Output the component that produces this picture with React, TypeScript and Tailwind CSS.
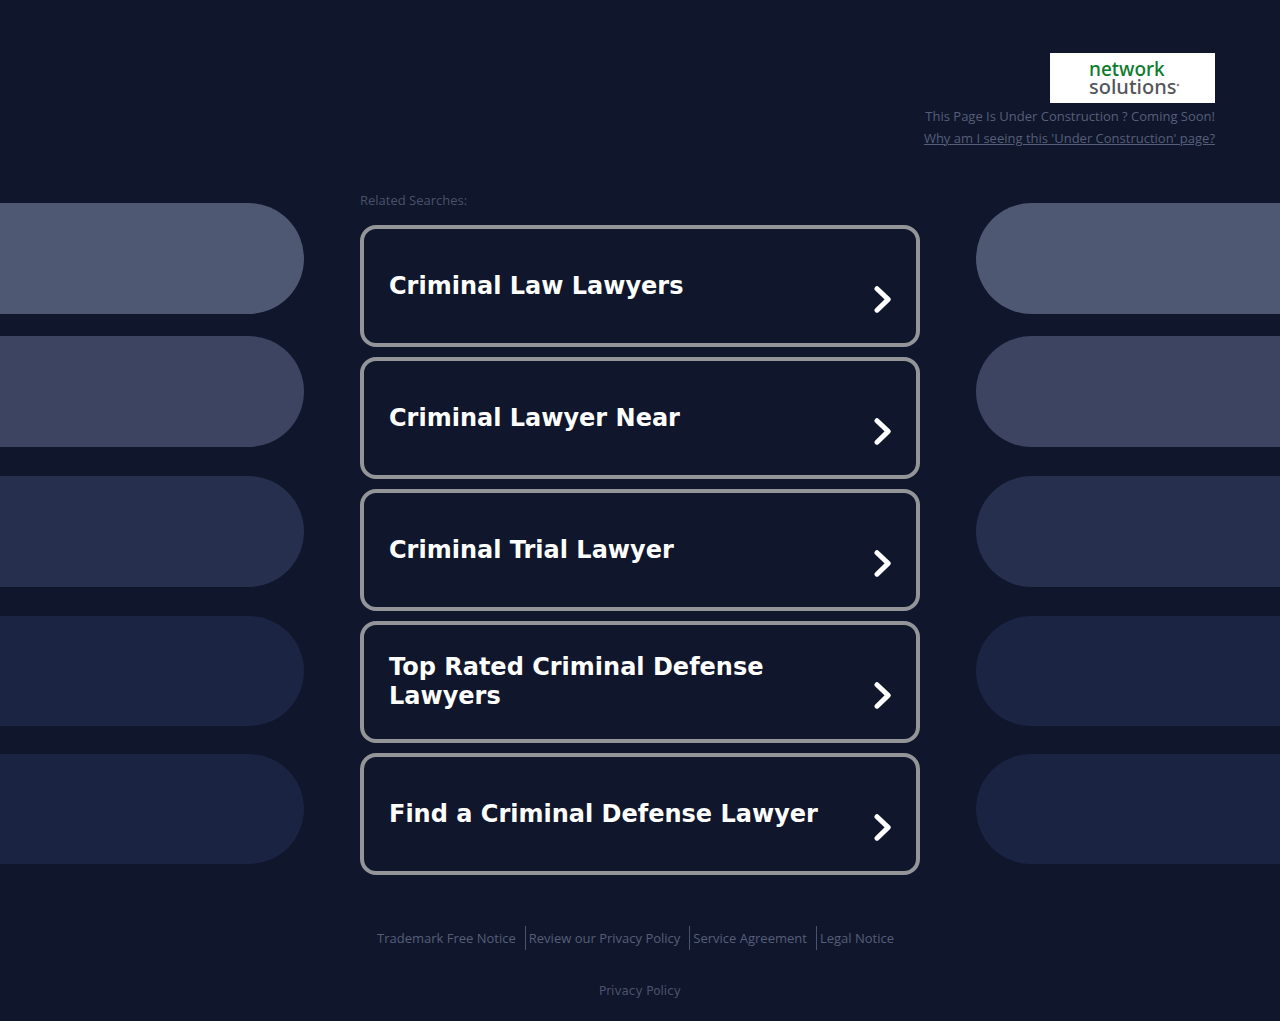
import React from 'react';

const searches = [
  'Criminal Law Lawyers',
  'Criminal Lawyer Near',
  'Criminal Trial Lawyer',
  'Top Rated Criminal Defense Lawyers',
  'Find a Criminal Defense Lawyer',
];

const notices = ['Trademark Free Notice', 'Review our Privacy Policy', 'Service Agreement', 'Legal Notice'];

const Logo = () => (
  <svg className="h-[50px] w-[165px] bg-white" viewBox="0 0 165 50" role="img" aria-label="Network Solutions">
    <g fontFamily="'Noto Sans', sans-serif">
      <text x="39" y="23" fontSize="19" fill="#0b7a2c">
        network
      </text>
      <text x="39" y="41" fontSize="20" fill="#55565a">
        solutions
      </text>
    </g>
    <circle cx="128" cy="32" r="1.300" fill="#8a8a8a" />
  </svg>
);

const Chevron = () => (
  <svg className="mt-7 h-7 w-[18px] shrink-0" viewBox="0 0 18 28" fill="none" aria-hidden="true">
    <path
      d="M4 2.750 L15.200 13.400 L4 24.200"
      stroke="white"
      strokeWidth="5"
      strokeLinecap="round"
      strokeLinejoin="round"
    />
  </svg>
);

const Pills = ({ side }: { side: 'left' | 'right' }) => {
  const round = side === 'left' ? 'rounded-r-full' : 'rounded-l-full';
  return (
    <div className="min-w-0 flex-1 pt-[11px]" aria-hidden="true">
      <div className={`h-[111px] bg-[#4f5873] ${round}`} />
      <div className={`mt-[22px] h-[111px] bg-[#3c4462] ${round}`} />
      <div className={`mt-[29px] h-[111px] bg-[#262f4e] ${round}`} />
      <div className={`mt-[29px] h-[110px] bg-[#1b2443] ${round}`} />
      <div className={`mt-7 h-[110px] bg-[#1a2341] ${round}`} />
    </div>
  );
};

const App = () => {
  return (
    <div className="min-h-screen overflow-hidden bg-[#10162b] font-['Open_Sans',sans-serif] text-[13px] font-medium text-[#565f7a]">
      <header className="flex flex-col items-end pt-[53px] pr-[65px]">
        <Logo />
        <p className="mt-[2px] leading-[22px]">This Page Is Under Construction ? Coming Soon!</p>
        <a href="#" className="leading-[22px] underline">
          Why am I seeing this 'Under Construction' page?
        </a>
      </header>

      <div className="mt-[43px] flex gap-14">
        <Pills side="left" />
        <main className="w-[560px] max-w-full">
          <h2 className="leading-4 text-[#4a526a]">Related Searches:</h2>
          <ul className="mt-[17px] flex flex-col gap-[10px]">
            {searches.map((s) => (
              <li key={s}>
                <a
                  href="#"
                  className="flex h-[122px] items-center justify-between rounded-[16px] border-4 border-[#949599] px-[25px] font-['DejaVu_Sans',sans-serif] text-[24px] leading-[29px] font-bold text-white"
                >
                  <span className="max-w-[440px]">{s}</span>
                  <Chevron />
                </a>
              </li>
            ))}
          </ul>
        </main>
        <Pills side="right" />
      </div>

      <footer className="mt-[51px] flex flex-col items-center pb-5">
        <nav className="flex pr-3 leading-6">
          {notices.map((n) => (
            <a key={n} href="#" className="border-r border-[#4b536d] pr-[9px] pl-[3px] last:border-r-0 last:pr-0">
              {n}
            </a>
          ))}
        </nav>
        <a
          href="#"
          className="mt-8 font-['DejaVu_Sans',sans-serif] text-[12px] leading-[18px] font-normal text-[#4b536d]"
        >
          Privacy Policy
        </a>
      </footer>
    </div>
  );
};

export default App;
